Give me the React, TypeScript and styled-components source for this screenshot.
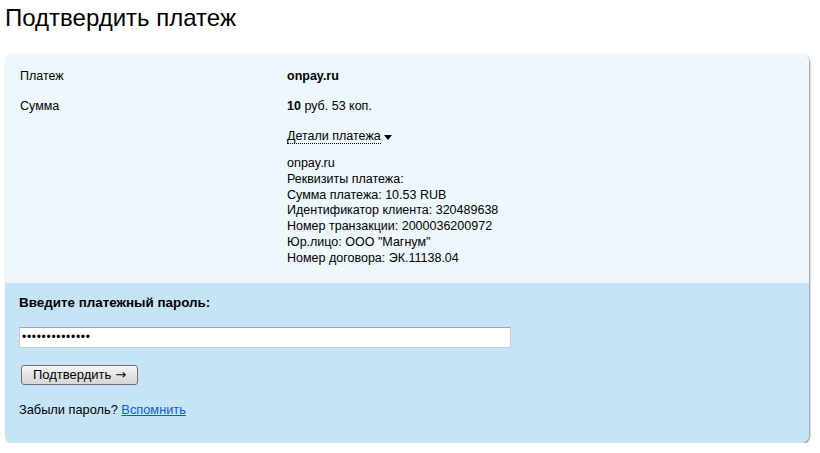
import { createGlobalStyle } from "styled-components"
import styled from "styled-components"

const GlobalStyle = createGlobalStyle`
  body {
    margin: 0;
    background: #fff;
    color: #000;
    font-family: "Liberation Sans", Arial, sans-serif;
    font-size: 12.5px;
  }
`

const Page = styled.div`
  padding: 4px 11px 0 5px;
`

const Title = styled.h1`
  margin: 0 0 22px;
  font-size: 24px;
  font-weight: normal;
  line-height: 28px;
`

const Card = styled.div`
  width: 804px;
  border-radius: 8px;
  overflow: hidden;
  box-shadow: 1px 1px 2px rgba(0, 0, 0, 0.45), 0 0 1px rgba(0, 0, 0, 0.12);
`

const InfoSection = styled.div`
  background: #eef6fe;
  padding: 14px 15px 16px;
`

const Row = styled.div<{ $gap?: number }>`
  display: grid;
  grid-template-columns: 267px 1fr;
  line-height: 16px;
  margin-top: ${p => p.$gap ?? 0}px;
`

const Label = styled.div``

const Value = styled.div``

const Strong = styled.b`
  font-weight: bold;
`

const DetailsToggle = styled.span`
  display: inline-flex;
  align-items: center;
  gap: 3px;
  cursor: pointer;
`

const DottedText = styled.span`
  border-bottom: 1px dotted #000;
  line-height: 14px;
`

const Caret = styled.span`
  width: 0;
  height: 0;
  border-left: 4px solid transparent;
  border-right: 4px solid transparent;
  border-top: 5px solid #000;
  margin-top: 1px;
`

const DetailLines = styled.div`
  line-height: 15.8px;
`

const PasswordSection = styled.div`
  background: #c6e4f8;
  padding: 12px 14px 25px;
  font-size: 12.8px;
`

const FieldLabel = styled.div`
  font-size: 13.4px;
  font-weight: bold;
  line-height: 16px;
`

const PasswordInput = styled.input`
  display: block;
  box-sizing: border-box;
  width: 492px;
  height: 21px;
  margin: 16px 0 0;
  padding: 0 2px;
  border: 1px solid #c9ccd0;
  border-top-color: #a0a4aa;
  background: #fff;
  font-family: "Liberation Sans", Arial, sans-serif;
  font-size: 12px;
  letter-spacing: 0.7px;
  color: #000;
  outline: none;
`

const SubmitButton = styled.button`
  display: flex;
  align-items: center;
  gap: 4px;
  margin: 17px 0 0 2px;
  height: 20px;
  padding: 0 11px;
  border: 1px solid #707070;
  border-radius: 3px;
  background: linear-gradient(#f6f6f6, #e4e4e4 50%, #d6d6d6);
  font-family: "Liberation Sans", Arial, sans-serif;
  font-size: 13px;
  color: #000;
  line-height: 18px;
`

const Arrow = styled.span`
  font-family: "DejaVu Sans", sans-serif;
  font-size: 13px;
`

const Forgot = styled.div`
  margin-top: 17px;
  line-height: 16px;
`

const Link = styled.a`
  color: #0a5fd0;
  text-decoration: underline;
`

const details = [
  "onpay.ru",
  "Реквизиты платежа:",
  "Сумма платежа: 10.53 RUB",
  "Идентификатор клиента: 320489638",
  "Номер транзакции: 2000036200972",
  'Юр.лицо: ООО "Магнум"',
  "Номер договора: ЭК.11138.04",
]

export default function App() {
  return (
    <>
      <GlobalStyle />
      <Page>
        <Title>Подтвердить платеж</Title>
        <Card>
          <InfoSection>
            <Row>
              <Label>Платеж</Label>
              <Value><Strong>onpay.ru</Strong></Value>
            </Row>
            <Row $gap={14}>
              <Label>Сумма</Label>
              <Value><Strong>10</Strong> руб. 53 коп.</Value>
            </Row>
            <Row $gap={14}>
              <Label />
              <Value>
                <DetailsToggle>
                  <DottedText>Детали платежа</DottedText>
                  <Caret />
                </DetailsToggle>
              </Value>
            </Row>
            <Row $gap={12}>
              <Label />
              <DetailLines>
                {details.map(line => (
                  <div key={line}>{line}</div>
                ))}
              </DetailLines>
            </Row>
          </InfoSection>
          <PasswordSection>
            <FieldLabel>Введите платежный пароль:</FieldLabel>
            <PasswordInput type="password" defaultValue="12345678901234" />
            <SubmitButton type="button">
              Подтвердить <Arrow>→</Arrow>
            </SubmitButton>
            <Forgot>
              Забыли пароль? <Link href="#">Вспомнить</Link>
            </Forgot>
          </PasswordSection>
        </Card>
      </Page>
    </>
  )
}
